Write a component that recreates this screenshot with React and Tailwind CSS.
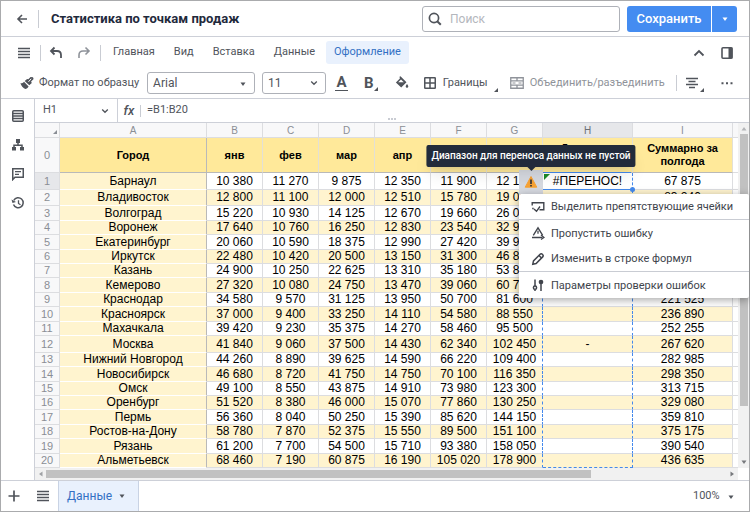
import { useState } from "react";

// ── Data ─────────────────────────────────────────────────────────────────────
const COLUMNS = [
  { letter: "A", title: "Город", width: "w-[147px]" },
  { letter: "B", title: "янв", width: "w-14" },
  { letter: "C", title: "фев", width: "w-14" },
  { letter: "D", title: "мар", width: "w-14" },
  { letter: "E", title: "апр", width: "w-14" },
  { letter: "F", title: "май", width: "w-14" },
  { letter: "G", title: "июн", width: "w-14" },
  { letter: "H", title: "Динамика продаж", width: "w-[90px]" },
  { letter: "I", title: "Суммарно за полгода", width: "w-[100px]" },
];

const ROWS = [
  { city: "Барнаул", months: [10380, 11270, 9875, 12350, 11900, 12100], spill: "#ПЕРЕНОС!", total: 67875, height: "h-[17px]" },
  { city: "Владивосток", months: [12800, 11100, 12000, 12510, 15780, 19050], total: 83240, height: "h-4" },
  { city: "Волгоград", months: [15220, 10930, 14125, 12670, 19660, 26000], total: 98605, height: "h-[15px]" },
  { city: "Воронеж", months: [17640, 10760, 16250, 12830, 23540, 32950], total: 113970, height: "h-[14px]" },
  { city: "Екатеринбург", months: [20060, 10590, 18375, 12990, 27420, 39900], total: 129335, height: "h-[15px]" },
  { city: "Иркутск", months: [22480, 10420, 20500, 13150, 31300, 46850], total: 144700, height: "h-[14px]" },
  { city: "Казань", months: [24900, 10250, 22625, 13310, 35180, 53800], total: 160065, height: "h-[14px]" },
  { city: "Кемерово", months: [27320, 10080, 24750, 13470, 39060, 60750], total: 175430, height: "h-[15px]" },
  { city: "Краснодар", months: [34580, 9570, 31125, 13950, 50700, 81600], total: 221525, height: "h-[14px]" },
  { city: "Красноярск", months: [37000, 9400, 33250, 14110, 54580, 88550], total: 236890, height: "h-[15px]" },
  { city: "Махачкала", months: [39420, 9230, 35375, 14270, 58460, 95500], total: 252255, height: "h-[14px]" },
  { city: "Москва", months: [41840, 9060, 37500, 14430, 62340, 102450], spill: "-", total: 267620, height: "h-[17px]" },
  { city: "Нижний Новгород", months: [44260, 8890, 39625, 14590, 66220, 109400], total: 282985, height: "h-[14px]" },
  { city: "Новосибирск", months: [46680, 8720, 41750, 14750, 70100, 116350], total: 298350, height: "h-[15px]" },
  { city: "Омск", months: [49100, 8550, 43875, 14910, 73980, 123300], total: 313715, height: "h-[14px]" },
  { city: "Оренбург", months: [51520, 8380, 46000, 15070, 77860, 130250], total: 329080, height: "h-[14px]" },
  { city: "Пермь", months: [56360, 8040, 50250, 15390, 85620, 144150], total: 359810, height: "h-[15px]" },
  { city: "Ростов-на-Дону", months: [58780, 7870, 52375, 15550, 89500, 151100], total: 375175, height: "h-[14px]" },
  { city: "Рязань", months: [61200, 7700, 54500, 15710, 93380, 158050], total: 390540, height: "h-[15px]" },
  { city: "Альметьевск", months: [68460, 7190, 60875, 16190, 105020, 178900], total: 436635, height: "h-[14px]" },
];

const TABS = ["Главная", "Вид", "Вставка", "Данные", "Оформление"];

const formatNumber = (n) => String(n).replace(/\B(?=(\d{3})+$)/g, " ");

// ── Icons ────────────────────────────────────────────────────────────────────
function Icon({ size = 14, children, className = "" }) {
  return (
    <svg
      width={size}
      height={size}
      viewBox={`0 0 ${size} ${size}`}
      fill="none"
      stroke="currentColor"
      strokeWidth="1.5"
      className={`shrink-0 ${className}`}
      aria-hidden="true"
    >
      {children}
    </svg>
  );
}

const BackIcon = () => (
  <Icon><path d="M12 7H3M7 3L3 7l4 4" strokeWidth="1.6" /></Icon>
);
const LinesIcon = () => (
  <Icon><path d="M1 2.5h12M1 5.5h12M1 8.5h12M1 11.5h12" strokeWidth="1.4" /></Icon>
);
const UndoIcon = () => (
  <Icon><path d="M5.5 1.5L2 5l3.5 3.5M2.5 5H8c2.5 0 4 1.500 4 4v3" strokeWidth="1.8" /></Icon>
);
const RedoIcon = () => (
  <Icon><path d="M8.5 1.5L12 5 8.5 8.5M11.5 5H6C3.5 5 2 6.5 2 9v3" strokeWidth="1.6" /></Icon>
);
const SearchIcon = () => (
  <Icon><circle cx="6" cy="6" r="4.6" strokeWidth="1.7" /><path d="M9.2 9.2l3.6 3.6" strokeWidth="2" /></Icon>
);
const ChevronDown = ({ className }) => (
  <Icon size={8} className={className}><path d="M1.2 2.5L4 5.3l2.8-2.8" strokeWidth="1.3" /></Icon>
);
const ChevronUp = () => (
  <Icon><path d="M2.5 9.5L7 5l4.5 4.5" strokeWidth="1.8" /></Icon>
);
const Caret = ({ className }) => (
  <Icon size={8} className={className}><path d="M1.5 2.5h5L4 6z" fill="currentColor" stroke="none" /></Icon>
);
const CornerMark = () => (
  <Icon size={4} className="self-end"><path d="M4 0v4H0z" fill="currentColor" stroke="none" /></Icon>
);
const PanelIcon = () => (
  <Icon><rect x="2" y="1.75" width="10" height="10.5" rx="1" strokeWidth="1.6" /><path d="M8.5 1.5h4v11h-4z" fill="currentColor" stroke="none" /></Icon>
);
const BrushIcon = () => (
  <Icon>
    <path d="M8.3 3.3l2.300-2.300 2.400.3.600 1.700-2.500 2.600.7 1.300-2.500 2.300L4.700 5l2.400-2.100z" fill="currentColor" stroke="none" />
    <path d="M4 5.700l4.600 4.700c-.8 1.500-1.900 2.300-3.400 2.600C3 11.900 1.200 9.800.4 7.200c1.300.2 2.600-.3 3.600-1.500z" fill="currentColor" stroke="none" />
    <path d="M8.500 5.800l2.700-3" stroke="#fff" strokeWidth="1" />
  </Icon>
);
const BucketIcon = () => (
  <Icon>
    <path d="M4.500.8l1-.5 6 6-5.300 5.300L.900 6.500l4-4z" fill="currentColor" stroke="none" />
    <path d="M3.200 6.200h5.600L6 3.500z" fill="#fff" stroke="none" />
    <path d="M12 8c.9 1.200 1.300 1.900 1.300 2.500a1.300 1.300 0 01-2.600 0c0-.6.4-1.300 1.300-2.500z" fill="currentColor" stroke="none" />
  </Icon>
);
const BordersIcon = () => (
  <Icon><rect x="1.75" y="1.75" width="10.5" height="10.5" rx=".5" /><path d="M7 2v10M2 7h10" /></Icon>
);
const MergeIcon = () => (
  <Icon><path d="M.75 1.75h12.5v10.5H.75zM1 4.8h12M1 9.200h12M7 2v3M7 9v3" strokeWidth="1.3" /><path d="M2.500 7h3M8.500 7h3" strokeWidth="1.2" /></Icon>
);
const AlignIcon = () => (
  <Icon><path d="M1 2.500h12M3.500 5.500h7M1 8.500h12M4 11.500h6" strokeWidth="1.5" /></Icon>
);
const DotsIcon = () => (
  <Icon><path d="M1.500 6.200h2v2h-2zM6 6.200h2v2H6zM10.500 6.200h2v2h-2z" fill="currentColor" stroke="none" /></Icon>
);
const TableIcon = () => (
  <Icon><rect x="1.75" y="1.75" width="10.5" height="10.5" rx="1" /><path d="M2 4.500h10M2 7h10M2 9.500h10" strokeWidth="1.3" /></Icon>
);
const TreeIcon = () => (
  <Icon><path d="M5 1h4v4H5zM1 9h4v3.500H1zM9 9h4v3.500H9z" fill="currentColor" stroke="none" /><path d="M7 5v2.200M3 9V7.200h8V9" /></Icon>
);
const CommentIcon = () => (
  <Icon><path d="M1.75 1.75h10.5v8.500H4l-2.250 2.300z" /><path d="M4 4.700h6M4 7.300h4" strokeWidth="1.3" /></Icon>
);
const HistoryIcon = () => (
  <Icon><path d="M2.500 8.500A5 5 0 102.800 4.300" /><path d="M.5 3.500l1 3.500 3.500-1z" fill="currentColor" stroke="none" /><path d="M7.500 4.200v3.300l2 1.300" strokeWidth="1.3" /></Icon>
);
const PlusIcon = () => (
  <Icon><path d="M7 1.500v11M1.500 7h11" strokeWidth="1.7" /></Icon>
);
const WarningIcon = () => (
  <Icon>
    <path d="M7 1.500l5.800 10.700H1.200z" fill="#f7a234" stroke="#f7a234" strokeLinejoin="round" strokeWidth="1" />
    <path d="M7 4.500V9M7 10v1.600" stroke="#2b2f38" strokeWidth="1.6" />
  </Icon>
);
const BlockingIcon = () => (
  <Icon><path d="M1.200 5.500V2.700h11.600v7H8.500M1.200 8.500h1.500" strokeWidth="1.4" /><path d="M3 9l2.500 2.300L9 6.500" strokeWidth="1.4" /></Icon>
);
const SkipIcon = () => (
  <Icon><path d="M2.300 9.300L7 1.800l4.700 7.500M7 4.800v3M1 11.500h10.500" strokeWidth="1.3" /><path d="M10 9l3 2.500-3 2" strokeWidth="1.2" /></Icon>
);
const PencilIcon = () => (
  <Icon><path d="M1.800 12.200l.7-3.300 6.600-6.600c.7-.7 1.600-.6 2.200 0l.4.4c.6.6.6 1.500 0 2.200l-6.600 6.600zM8 3.500L10.500 6" strokeWidth="1.5" /></Icon>
);
const SlidersIcon = () => (
  <Icon><path d="M4 1.500V8M10 6v7" /><circle cx="4" cy="9.700" r="1.600" /><path d="M4 11.500V13" /><circle cx="10" cy="4" r="1.600" fill="currentColor" /></Icon>
);

const Divider = () => <span className="h-4 w-px bg-[#c9ccd3]" />;

// ── Top bars ─────────────────────────────────────────────────────────────────
function TitleBar() {
  return (
    <header className="flex h-9 items-center border-b border-[#cdd0d8] pr-3 pl-[14px]">
      <button aria-label="Назад"><BackIcon /></button>
      <span className="ml-[9px] h-[18px] w-px bg-[#c9ccd3]" />
      <h1 className="ml-3 text-[13px] font-bold whitespace-nowrap text-[#1f2a3c]">Статистика по точкам продаж</h1>
      <label className="ml-auto flex h-[26px] w-[198px] items-center gap-2 rounded-[3px] border border-[#aeb1b8] pl-[5px]">
        <SearchIcon />
        <input type="search" aria-label="Поиск" placeholder="Поиск" className="min-w-0 flex-1 text-xs outline-none placeholder:text-[#b4b7bd]" />
      </label>
      <div className="ml-[7px] flex h-[26px] gap-px text-white">
        <button className="w-[84px] rounded-l-[3px] bg-[#448cf1] text-[13px] font-medium">Сохранить</button>
        <button aria-label="Варианты сохранения" className="flex w-[25px] items-center justify-center rounded-r-[3px] bg-[#448cf1]">
          <Caret />
        </button>
      </div>
    </header>
  );
}

function MenuBar({ active, onSelect }) {
  return (
    <nav className="flex h-[31px] items-center pr-[15px] pl-4">
      <button aria-label="Меню"><LinesIcon /></button>
      <div className="ml-[9px] flex items-center">
        <Divider />
        <button aria-label="Отменить" className="ml-2"><UndoIcon /></button>
        <button aria-label="Повторить" className="mr-[9px] ml-[14px] text-[#8f939a]"><RedoIcon /></button>
        <Divider />
      </div>
      <div className="ml-1 flex gap-[3px]">
        {TABS.map((tab) => (
          <button
            key={tab}
            onClick={() => onSelect(tab)}
            className={`h-[23px] rounded-[3px] px-2 text-[11px] whitespace-nowrap ${tab === active ? "bg-[#e9f1fd] text-[#3370c4]" : ""}`}
          >
            {tab}
          </button>
        ))}
      </div>
      <div className="ml-auto flex gap-[14px]">
        <button aria-label="Свернуть панель"><ChevronUp /></button>
        <button aria-label="Боковая панель"><PanelIcon /></button>
      </div>
    </nav>
  );
}

function ToolSelect({ label, value, className, children }) {
  return (
    <div className={`relative h-[22px] shrink-0 ${className}`}>
      <select aria-label={label} defaultValue={value} className="h-full w-full appearance-none rounded-[3px] border border-[#aeb1b8] pl-[5px] text-xs outline-none">
        <option>{value}</option>
      </select>
      {children}
    </div>
  );
}

function Toolbar() {
  return (
    <div className="flex h-[31px] items-center border-b border-[#cdd0d8] pr-[15px] pl-[19px] text-[11px] whitespace-nowrap">
      <button className="flex items-center gap-[5px]"><BrushIcon />Формат по образцу</button>
      <ToolSelect label="Шрифт" value="Arial" className="ml-2 w-[108px]">
        <Caret className="pointer-events-none absolute top-[8px] right-2" />
      </ToolSelect>
      <ToolSelect label="Размер шрифта" value="11" className="ml-[7px] w-16">
        <ChevronDown className="pointer-events-none absolute top-[7px] right-2" />
      </ToolSelect>
      <button aria-label="Цвет текста" className="ml-[9px] h-[15px] w-[13px] border-b border-current text-[15px] leading-[13px] font-bold">A</button>
      <button aria-label="Полужирный" className="ml-4 flex items-center text-[15px] leading-4 font-bold">B<CornerMark /></button>
      <span className="mr-2.5 ml-[7px]"><Divider /></span>
      <button aria-label="Заливка"><BucketIcon /></button>
      <button className="ml-[14px] flex items-center gap-[6px]"><BordersIcon />Границы<span className="flex h-[17px]"><CornerMark /></span></button>
      <button className="ml-3 flex items-center gap-[6px] text-[#8f939a]"><MergeIcon />Объединить/разъединить</button>
      <div className="ml-auto flex items-center">
        <Divider />
        <button aria-label="Выравнивание" className="ml-2 flex h-[17px] items-center gap-px"><AlignIcon /><CornerMark /></button>
        <button aria-label="Ещё" className="ml-4"><DotsIcon /></button>
      </div>
    </div>
  );
}

function FormulaBar() {
  return (
    <div className="relative flex h-6 items-center border-b border-[#cdd0d8] text-[11px]">
      <div className="relative h-full w-[83px] border-r border-[#cdd0d8]">
        <select aria-label="Ячейка" defaultValue="H1" className="h-full w-full appearance-none pl-2 outline-none">
          <option>H1</option>
        </select>
        <ChevronDown className="pointer-events-none absolute top-[8px] right-2" />
      </div>
      <label htmlFor="formula" className="w-[22px] text-center text-[13px] font-medium italic">fx</label>
      <span className="h-3 w-px bg-[#c9ccd3]" />
      <input id="formula" defaultValue="=B1:B20" className="min-w-0 flex-1 pl-[6px] outline-none" />
      <span className="absolute bottom-[2px] left-1/2 flex -translate-x-1/2 gap-px">
        <i className="h-[2px] w-[2px] bg-[#c9ccd3]" />
        <i className="h-[2px] w-[2px] bg-[#c9ccd3]" />
        <i className="h-[2px] w-[2px] bg-[#c9ccd3]" />
      </span>
    </div>
  );
}

function SideBar() {
  return (
    <aside className="flex w-[34px] shrink-0 flex-col items-center gap-[15px] border-r border-[#cdd0d8] pt-[10px]">
      <button aria-label="Таблица"><TableIcon /></button>
      <button aria-label="Структура"><TreeIcon /></button>
      <button aria-label="Комментарии"><CommentIcon /></button>
      <button aria-label="История"><HistoryIcon /></button>
    </aside>
  );
}

// ── Grid ─────────────────────────────────────────────────────────────────────
function ErrorMenu() {
  const item = "flex h-[26px] w-full items-center gap-[6px] pr-4 pl-3 text-left";
  return (
    <div className="absolute -top-[3px] right-full z-20 font-[Roboto,sans-serif]">
      <div role="tooltip" className="absolute bottom-full left-1/2 mb-[3px] -translate-x-1/2 rounded-[2px] bg-[#222b3b] px-[5px] text-[10px] leading-[22px] font-medium whitespace-nowrap text-white shadow-lg">
        Диапазон для переноса данных не пустой
        <span className="absolute top-full left-1/2 -ml-1 border-x-4 border-t-4 border-x-transparent border-t-[#222b3b]" />
      </div>
      <button aria-label="Ошибка переноса" className="flex h-6 w-6 items-center justify-center bg-[#d6d9e0]">
        <WarningIcon />
      </button>
      <div role="menu" className="absolute top-full left-0 rounded-[2px] bg-white text-[11px] whitespace-nowrap text-[#40444c] shadow-[0_2px_8px_rgba(0,0,0,0.35)]">
        <button role="menuitem" className={`${item} border-b border-[#c9ccd3]`}><BlockingIcon />Выделить препятствующие ячейки</button>
        <button role="menuitem" className={item}><SkipIcon />Пропустить ошибку</button>
        <button role="menuitem" className={`${item} border-b border-[#c9ccd3]`}><PencilIcon />Изменить в строке формул</button>
        <button role="menuitem" className={item}><SlidersIcon />Параметры проверки ошибок</button>
      </div>
    </div>
  );
}

function SelectedCell({ children }) {
  return (
    <td className="relative border-r border-b border-r-[#4489ec] border-b-[#4489ec] [border-right-style:dashed]">
      <span className="absolute -top-px -left-px h-px w-full bg-[#4489ec]" />
      <span className="absolute top-px left-px border-t-[6px] border-r-[6px] border-t-[#1b8a2b] border-r-transparent" />
      {children}
      <span className="absolute -right-[3px] -bottom-[3px] h-[5px] w-[5px] rounded-full bg-[#4489ec]" />
      <ErrorMenu />
    </td>
  );
}

function SpillCell({ children, band, last }) {
  return (
    <td
      className={`border-r border-b border-dashed border-r-[#4489ec] ${band} ${
        last ? "border-b-[#4489ec]" : "border-b-[#dcdde0] [border-bottom-style:solid]"
      }`}
    >
      {children}
    </td>
  );
}

function Sheet() {
  const line = "border-r border-b border-[#dcdde0]";
  return (
    <table className="w-full table-fixed border-separate border-spacing-0 bg-white text-center font-['Liberation_Sans',sans-serif] text-xs leading-[13px] text-black">
      <colgroup>
        <col className="w-[25px]" />
        {COLUMNS.map((c) => <col key={c.letter} className={c.width} />)}
        <col />
      </colgroup>
      <thead>
        <tr className="h-[15px] bg-[#f8f8f9] text-[10px] text-[#8a8e95]">
          <th className={line}>
            <Icon size={4} className="mt-1 mr-0.5 ml-auto"><path d="M4 0v4H0z" fill="currentColor" stroke="none" /></Icon>
          </th>
          {COLUMNS.map((c) => (
            <th key={c.letter} className={`${line} font-normal ${c.letter === "H" ? "bg-[#e6e7ea] text-[#6b6f76]" : ""}`}>
              {c.letter}
            </th>
          ))}
          <th className="border-b border-[#dcdde0]" />
        </tr>
        <tr className="h-[35px] text-[11px]">
          <th className={`${line} bg-[#f8f8f9] font-normal text-[#8a8e95]`}>0</th>
          {COLUMNS.map((c) => (
            <th
              key={c.letter}
              className={`border-r border-b border-b-[#b9b9b9] bg-[#ffe99a] font-bold ${c.letter === "A" ? "border-r-[#b9b9b9]" : "border-r-[#e3e0d5]"}`}
            >
              {c.title}
            </th>
          ))}
          <th className="border-b border-[#dcdde0]" />
        </tr>
      </thead>
      <tbody>
        {ROWS.map((row, i) => {
          const band = i % 2 ? "bg-[#fff4cf]" : "";
          return (
            <tr key={row.city} className={row.height}>
              <th className={`${line} text-[11px] font-normal text-[#8a8e95] ${i === 0 ? "bg-[#e6e7ea]" : "bg-[#f8f8f9]"}`}>{i + 1}</th>
              <td className="border-r border-b border-r-[#b9b9b9] border-b-white bg-[#fff4cf]">{row.city}</td>
              {row.months.map((value, m) => (
                <td
                  key={m}
                  className={`border-r border-b border-b-[#dcdde0] ${band} ${
                    m === 5 && i > 0 ? "border-r-[#4489ec] [border-right-style:dashed]" : "border-r-[#dcdde0]"
                  }`}
                >
                  {formatNumber(value)}
                </td>
              ))}
              {i === 0 ? (
                <SelectedCell>{row.spill}</SelectedCell>
              ) : (
                <SpillCell band={band} last={i === ROWS.length - 1}>{row.spill}</SpillCell>
              )}
              <td className={`${line} ${band}`}>{formatNumber(row.total)}</td>
              <td className="border-b border-[#dcdde0]" />
            </tr>
          );
        })}
      </tbody>
    </table>
  );
}

function VerticalScroll() {
  return (
    <div className="flex w-[11px] shrink-0 flex-col items-center bg-[#f1f1f1] py-[2px] text-[#77797d]">
      <Caret className="rotate-180 text-[#b3b5b8]" />
      <div className="mt-px h-[272px] w-2 bg-[#c1c1c1]" />
      <Caret className="mt-auto" />
    </div>
  );
}

function HorizontalScroll() {
  return (
    <div className="mr-[11px] flex h-3 items-center bg-[#f1f1f1] px-[2px] text-[#77797d]">
      <Caret className="rotate-90 text-[#a0a2a5]" />
      <div className="flex flex-1 px-px">
        <div className="h-2 w-4/5 bg-[#c1c1c1]" />
      </div>
      <Caret className="-rotate-90" />
    </div>
  );
}

function Footer() {
  return (
    <footer className="flex h-[31px] items-center border-t border-[#cdd0d8] pr-[14px] pl-[6px] text-[11px]">
      <button aria-label="Добавить лист"><PlusIcon /></button>
      <button aria-label="Список листов" className="mx-[15px]"><LinesIcon /></button>
      <button className="-ml-[7px] flex h-full items-center gap-[6px] border-x border-[#c9d3e4] bg-[#e9f1fd] pr-3 pl-2 text-xs text-[#3370c4]">
        Данные
        <Caret className="text-[#50545b]" />
      </button>
      <div className="relative ml-auto">
        <select aria-label="Масштаб" defaultValue="100%" className="w-[42px] appearance-none outline-none">
          <option>100%</option>
        </select>
        <Caret className="pointer-events-none absolute top-[5px] right-0" />
      </div>
    </footer>
  );
}

export default function App() {
  const [tab, setTab] = useState("Оформление");

  return (
    <div className="flex min-h-screen flex-col border border-[#aaabad] bg-white font-[Roboto,sans-serif] text-[#50545b]">
      <TitleBar />
      <MenuBar active={tab} onSelect={setTab} />
      <Toolbar />
      <div className="flex flex-1">
        <SideBar />
        <main className="flex min-w-0 flex-1 flex-col">
          <FormulaBar />
          <div className="flex">
            <div className="min-w-0 flex-1"><Sheet /></div>
            <VerticalScroll />
          </div>
          <HorizontalScroll />
        </main>
      </div>
      <Footer />
    </div>
  );
}
